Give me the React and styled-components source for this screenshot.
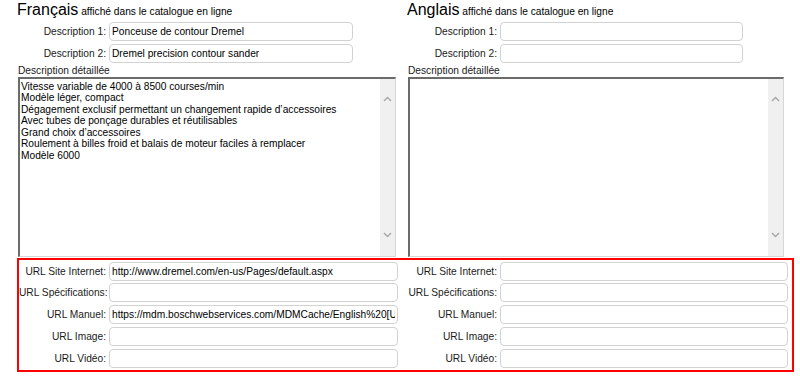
import styled, { createGlobalStyle } from "styled-components";

const GlobalStyle = createGlobalStyle`
  body {
    margin: 0;
    background: #ffffff;
    font-family: "Liberation Sans", Arial, sans-serif;
    color: #111;
  }
`;

const Page = styled.div`
  width: 800px;
  height: 377px;
  padding-left: 17px;
  box-sizing: border-box;
  overflow: hidden;
`;

const Columns = styled.div`
  display: flex;
  gap: 10px;
`;

const Column = styled.div`
  flex: 0 0 ${(p) => p.$width}px;
  display: flex;
  flex-direction: column;
`;

const Header = styled.div`
  font-size: 16px;
  line-height: 20px;
  color: #000;
  white-space: nowrap;
`;

const Subtitle = styled.span`
  font-size: 10.2px;
`;

const Fields = styled.div`
  display: flex;
  flex-direction: column;
  gap: 2.5px;
`;

const FieldRow = styled.div`
  display: grid;
  grid-template-columns: ${(p) => p.$labelWidth}px ${(p) => p.$inputWidth}px;
  column-gap: 3px;
  align-items: center;
`;

const FieldLabel = styled.label`
  font-size: 10.2px;
  text-align: right;
  white-space: nowrap;
  color: #1a1a1a;
`;

const TextInput = styled.input`
  height: 19px;
  width: 100%;
  box-sizing: border-box;
  border: 1px solid #d2d2d2;
  border-radius: 4px;
  padding: 0 2px;
  font-family: "Liberation Sans", Arial, sans-serif;
  font-size: 10.2px;
  color: #000;
  background: #fff;
  outline: none;
`;

const DetailLabel = styled.div`
  font-size: 10.2px;
  line-height: 13px;
  margin: 1px 0 0 1px;
  color: #1a1a1a;
`;

const TextBox = styled.div`
  display: flex;
  height: 180px;
  margin-left: 1px;
  width: calc(100% - 2px);
  box-sizing: border-box;
  border-style: solid;
  border-width: 2px 1px 1px 2px;
  border-color: #6b6b6b #d6d6d6 #d6d6d6 #6b6b6b;
  background: #fff;
`;

const TextArea = styled.textarea`
  flex: 1;
  border: none;
  resize: none;
  overflow: hidden;
  outline: none;
  padding: 2px 1px;
  margin: 0;
  font-family: "Liberation Sans", Arial, sans-serif;
  font-size: 10.2px;
  line-height: 11.5px;
  color: #000;
  background: #fff;
`;

const ScrollTrack = styled.div`
  width: 15px;
  background: #f0f0f0;
  display: flex;
  flex-direction: column;
  justify-content: space-between;
  align-items: center;
  padding: 17px 0 18px;
`;

const UrlBox = styled.div`
  display: flex;
  gap: 3px;
  width: 777px;
  box-sizing: border-box;
  margin-top: 1px;
  border: 2px solid #ff0000;
  padding: 2px 4px 2px 0;
`;

const UrlColumn = styled.div`
  display: grid;
  grid-template-columns: ${(p) => p.$labelWidth}px ${(p) => p.$inputWidth}px;
  column-gap: 3px;
  row-gap: 2.75px;
  align-items: center;
`;

const Chevron = ({ down }) => (
  <svg width="9" height="6" viewBox="0 0 9 6">
    <polyline
      points={down ? "1,1 4.5,4.5 8,1" : "1,5 4.5,1.5 8,5"}
      fill="none"
      stroke="#a6a6a6"
      strokeWidth="1.4"
    />
  </svg>
);

const frenchDetail = [
  "Vitesse variable de 4000 à 8500 courses/min",
  "Modèle léger, compact",
  "Dégagement exclusif permettant un changement rapide d’accessoires",
  "Avec tubes de ponçage durables et réutilisables",
  "Grand choix d’accessoires",
  "Roulement à billes froid et balais de moteur faciles à remplacer",
  "Modèle 6000",
].join("\n");

const urlLabels = [
  "URL Site Internet:",
  "URL Spécifications:",
  "URL Manuel:",
  "URL Image:",
  "URL Vidéo:",
];

const frenchUrls = [
  "http://www.dremel.com/en-us/Pages/default.aspx",
  "",
  "https://mdm.boschwebservices.com/MDMCache/English%20[US]/Manuals/6000.pdf",
  "",
  "",
];

const LanguageColumn = ({ width, title, desc1, desc2, detail, labelWidth, inputWidth }) => (
  <Column $width={width}>
    <Header>
      {title}
      <Subtitle> affiché dans le catalogue en ligne</Subtitle>
    </Header>
    <Fields>
      <FieldRow $labelWidth={labelWidth} $inputWidth={inputWidth}>
        <FieldLabel>Description 1:</FieldLabel>
        <TextInput defaultValue={desc1} />
      </FieldRow>
      <FieldRow $labelWidth={labelWidth} $inputWidth={inputWidth}>
        <FieldLabel>Description 2:</FieldLabel>
        <TextInput defaultValue={desc2} />
      </FieldRow>
    </Fields>
    <DetailLabel>Description détaillée</DetailLabel>
    <TextBox>
      <TextArea readOnly defaultValue={detail} />
      <ScrollTrack>
        <Chevron />
        <Chevron down />
      </ScrollTrack>
    </TextBox>
  </Column>
);

const UrlFields = ({ values, labelWidth, inputWidth }) => (
  <UrlColumn $labelWidth={labelWidth} $inputWidth={inputWidth}>
    {urlLabels.map((label, i) => [
      <FieldLabel key={label}>{label}</FieldLabel>,
      <TextInput key={label + "-input"} defaultValue={values[i]} />,
    ])}
  </UrlColumn>
);

export default function App() {
  return (
    <Page>
      <GlobalStyle />
      <Columns>
        <LanguageColumn
          width={380}
          title="Français"
          desc1="Ponceuse de contour Dremel"
          desc2="Dremel precision contour sander"
          detail={frenchDetail}
          labelWidth={89}
          inputWidth={244}
        />
        <LanguageColumn
          width={378}
          title="Anglais"
          desc1=""
          desc2=""
          detail=""
          labelWidth={90}
          inputWidth={243}
        />
      </Columns>
      <UrlBox>
        <UrlFields values={frenchUrls} labelWidth={87} inputWidth={289} />
        <UrlFields values={["", "", "", "", ""]} labelWidth={96} inputWidth={288} />
      </UrlBox>
    </Page>
  );
}
